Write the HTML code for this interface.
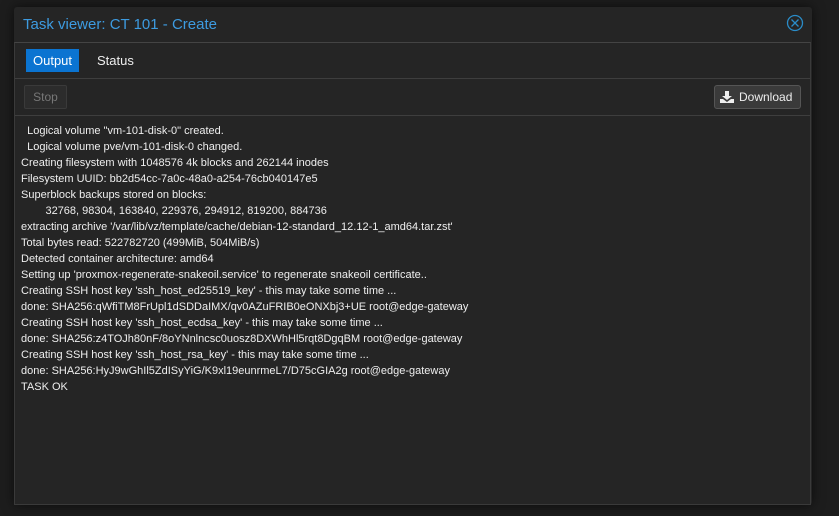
<!DOCTYPE html>
<html><head><style>
html,body{margin:0;padding:0;width:839px;height:516px;background:#1d1d1d;overflow:hidden;font-family:"Liberation Sans",sans-serif;}
.win{position:absolute;left:14px;top:7px;width:798px;height:498px;background:#252525;border-radius:3px;box-shadow:0 0 12px rgba(0,0,0,.6);}
.title{position:absolute;left:9px;top:9px;font-size:15px;color:#3d9be0;}
.close{position:absolute;left:772px;top:7px;}
.body{position:absolute;left:0;top:35px;width:795px;height:461px;border:1px solid #3a3a3a;border-top:1px solid #444;background:#252525;}
.tabbar{position:absolute;left:0;top:0;width:795px;height:35px;border-bottom:1px solid #3e3e3e;}
.tab1{position:absolute;left:11px;top:6px;width:53px;height:23px;background:#0b74d1;color:#fff;font-size:13px;line-height:23px;text-align:center;}
.tab2{position:absolute;left:82px;top:6px;color:#eee;font-size:13px;line-height:23px;}
.tool{position:absolute;left:0;top:36px;width:795px;height:36px;border-bottom:1px solid #3e3e3e;}
.stop{position:absolute;left:9px;top:6px;width:41px;height:22px;border:1px solid #3a3a3a;border-radius:2px;background:#2c2c2c;color:#777;font-size:12px;line-height:22px;text-align:center;}
.dl{position:absolute;left:699px;top:6px;width:85px;height:22px;border:1px solid #555;border-radius:3px;background:#3a3a3a;color:#eee;font-size:12px;line-height:22px;}
.dl svg{position:absolute;left:5px;top:5px;}
.dl span{position:absolute;left:24px;}
.log{position:absolute;left:6px;top:80px;color:#eee;font-size:11px;line-height:16px;white-space:pre;}
</style></head><body>
<div class="win">
<div class="title">Task viewer: CT 101 - Create</div>
<svg class="close" width="18" height="18" viewBox="0 0 18 18"><circle cx="9" cy="9" r="7.5" fill="none" stroke="#2a8cc8" stroke-width="1.3"/><path d="M5.5 5.5L12.5 12.5M12.5 5.5L5.5 12.5" stroke="#2a8cc8" stroke-width="1.3"/></svg>
<div class="body">
<div class="tabbar"><div class="tab1">Output</div><div class="tab2">Status</div></div>
<div class="tool"><div class="stop">Stop</div>
<div class="dl"><svg width="14" height="12" viewBox="0 0 14 12"><path d="M5 0h4v5h3L7 9 2 5h3z" fill="#eee"/><path d="M0 8h3l4 3 4-3h3v4H0z" fill="#eee"/></svg><span>Download</span></div></div>
<div class="log">  Logical volume "vm-101-disk-0" created.
  Logical volume pve/vm-101-disk-0 changed.
Creating filesystem with 1048576 4k blocks and 262144 inodes
Filesystem UUID: bb2d54cc-7a0c-48a0-a254-76cb040147e5
Superblock backups stored on blocks:
	32768, 98304, 163840, 229376, 294912, 819200, 884736
extracting archive '/var/lib/vz/template/cache/debian-12-standard_12.12-1_amd64.tar.zst'
Total bytes read: 522782720 (499MiB, 504MiB/s)
Detected container architecture: amd64
Setting up 'proxmox-regenerate-snakeoil.service' to regenerate snakeoil certificate..
Creating SSH host key 'ssh_host_ed25519_key' - this may take some time ...
done: SHA256:qWfiTM8FrUpl1dSDDaIMX/qv0AZuFRIB0eONXbj3+UE root@edge-gateway
Creating SSH host key 'ssh_host_ecdsa_key' - this may take some time ...
done: SHA256:z4TOJh80nF/8oYNnlncsc0uosz8DXWhHl5rqt8DgqBM root@edge-gateway
Creating SSH host key 'ssh_host_rsa_key' - this may take some time ...
done: SHA256:HyJ9wGhIl5ZdISyYiG/K9xl19eunrmeL7/D75cGIA2g root@edge-gateway
TASK OK</div>
</div>
</div>
</body></html>
